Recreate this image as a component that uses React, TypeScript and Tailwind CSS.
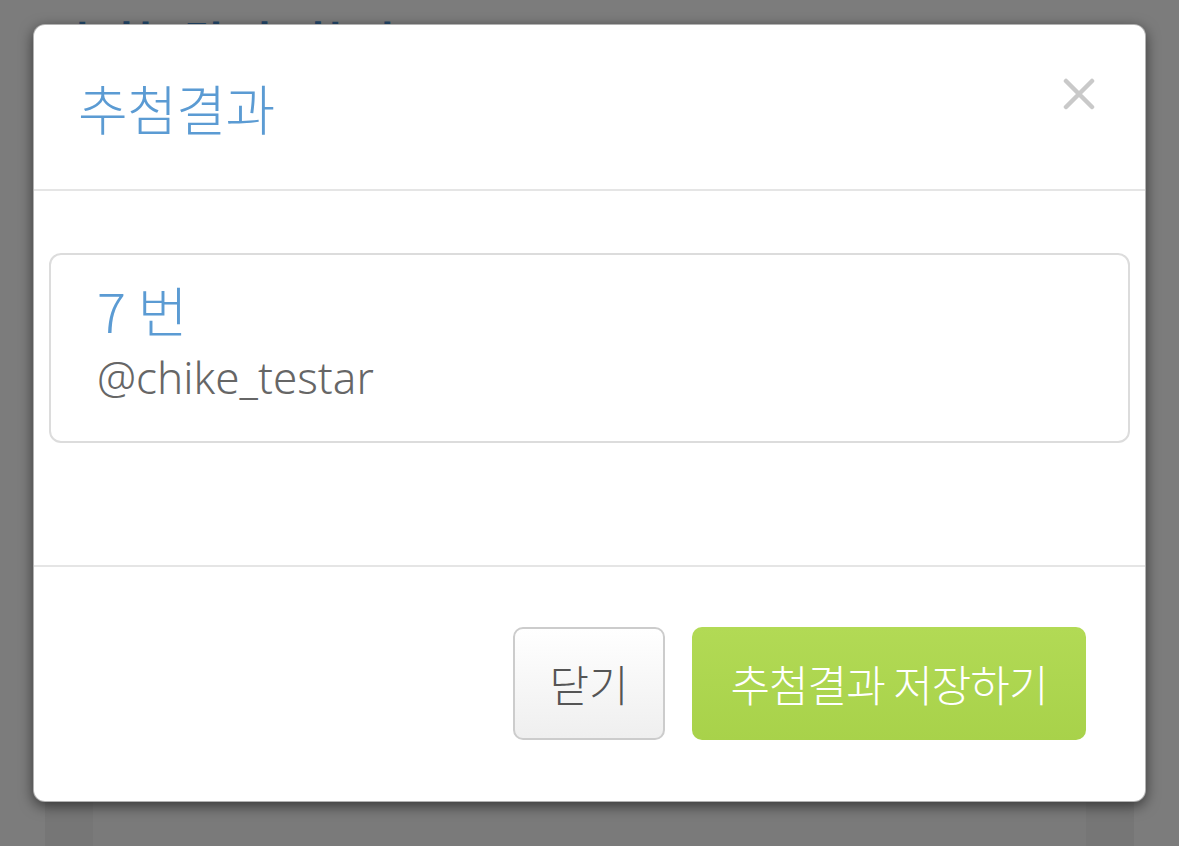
import React from 'react'

const ko = "font-['Noto_Sans_CJK_KR','Noto_Sans',sans-serif]"

function CloseIcon() {
  return (
    <svg width="32" height="32" viewBox="0 0 32 32" fill="none">
      <path d="M3 3 L29 29 M29 3 L3 29" stroke="#c9c9c9" strokeWidth="4.5" strokeLinecap="round" />
    </svg>
  )
}

export default function App() {
  return (
    <div className={`relative w-[1179px] h-[846px] overflow-hidden bg-[#7c7c7c] ${ko}`}>
      {/* page underneath the backdrop */}
      <div className="flex flex-col h-full">
        <div className="h-[60px] pl-[62px] pt-[16px] text-[44px] leading-[48px] text-[#24486a] font-bold tracking-[10px]">
          추첨 결과 확인
        </div>
        <div className="flex-1" />
        <div className="mx-[45px] h-[44px] bg-[#767676] px-[48px]">
          <div className="h-full bg-[#7a7a7a]" />
        </div>
      </div>

      {/* dialog */}
      <div className="absolute left-[33px] top-[24px] w-[1113px] h-[778px] bg-white rounded-[12px] border border-black/30 shadow-[0_4px_14px_rgba(0,0,0,0.55)] flex flex-col">
        <div className="h-[166px] flex items-start justify-between pl-[44px] pr-[50px] border-b-2 border-[#e5e5e5]">
          <h1 className="mt-[48px] text-[54px] leading-[70px] font-light text-[#5b9bd3] tracking-[-0.5px]">추첨결과</h1>
          <button className="mt-[53px]">
            <CloseIcon />
          </button>
        </div>

        <div className="flex-1 px-[15px] pt-[62px]">
          <div className="h-[190px] rounded-[12px] border-2 border-[#dcdcdc] pl-[46px] pt-[20px]">
            <div className="text-[54px] leading-[70px] font-light text-[#5b9bd3]">7 번</div>
            <div className="mt-[4px] text-[44px] leading-[56px] font-light text-[#666666] font-['Noto_Sans',sans-serif]">@chike_testar</div>
          </div>
        </div>

        <div className="h-[236px] border-t-2 border-[#e5e5e5] flex items-center justify-end gap-[27px] pr-[59px] pb-[1px]">
          <button className="w-[152px] h-[113px] rounded-[10px] border-2 border-[#cccccc] bg-gradient-to-b from-white to-[#efefef] text-[43px] font-light text-[#555555]">
            닫기
          </button>
          <button className="w-[394px] h-[113px] rounded-[10px] bg-gradient-to-b from-[#b2da55] to-[#a8d24a] text-[43px] font-light text-white tracking-[-1px]">
            추첨결과 저장하기
          </button>
        </div>
      </div>
    </div>
  )
}
